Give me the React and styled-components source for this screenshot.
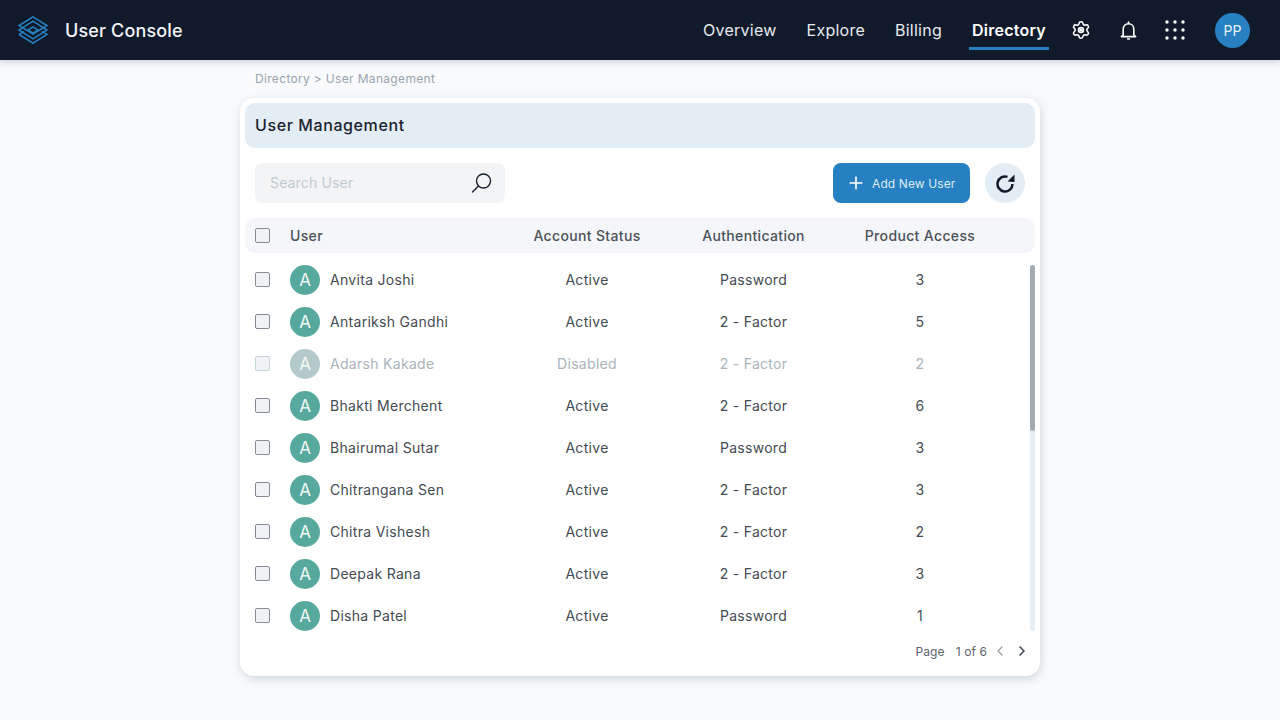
import React from 'react'
import styled, { createGlobalStyle } from 'styled-components'
import { Settings, Plus, ChevronLeft, ChevronRight } from 'lucide-react'

const GlobalStyle = createGlobalStyle`
  html, body {
    margin: 0;
    padding: 0;
    background: #f8fafc;
    font-family: Inter, "Noto Sans", sans-serif;
    color: #3f4650;
  }
  * { box-sizing: border-box; }
`;

const Page = styled.div`
  width: 1280px;
  height: 720px;
  overflow: hidden;
`;

const Header = styled.header`
  height: 60px;
  background: #111a2b;
  display: flex;
  align-items: center;
  padding: 0 30px 0 18px;
  box-shadow: 0 2px 6px rgba(60, 70, 85, 0.25);
`;

const Brand = styled.div`
  display: flex;
  align-items: center;
  gap: 17px;
  font-size: 18px;
  font-weight: 500;
  color: #f2f5f8;
  letter-spacing: 0.15px;
  margin-right: auto;
`;

const Nav = styled.nav`
  display: flex;
  align-items: center;
  height: 60px;
  gap: 24px;
  margin-right: 22px;
`;

const NavItem = styled.a`
  position: relative;
  padding: 0 3px;
  font-size: 16px;
  line-height: 60px;
  letter-spacing: 0.25px;
  font-weight: ${p => (p.$active ? 600 : 400)};
  color: ${p => (p.$active ? '#ffffff' : '#e6eaef')};
  &::after {
    content: ${p => (p.$active ? "''" : 'none')};
    position: absolute;
    left: 0;
    right: 0;
    bottom: 10px;
    height: 3px;
    background: #2680c2;
  }
`;

const IconRow = styled.div`
  display: flex;
  align-items: center;
  gap: 27px;
  color: #ffffff;
`;

const HeaderIcon = styled.span`
  display: flex;
  width: 20px;
  height: 20px;
  align-items: center;
  justify-content: center;
`;

const Avatar = styled.div`
  width: 35px;
  height: 35px;
  margin-left: 3px;
  border-radius: 50%;
  background: #2680c2;
  color: #e9f2f9;
  font-size: 14px;
  display: flex;
  align-items: center;
  justify-content: center;
`;

const Main = styled.main`
  width: 800px;
  margin: 0 auto;
`;

const Breadcrumb = styled.div`
  height: 38px;
  padding: 12px 0 0 15px;
  font-size: 12px;
  line-height: 14px;
  letter-spacing: 0.33px;
  color: #9aa5ad;
`;

const Card = styled.section`
  position: relative;
  height: 578px;
  padding: 5px;
  background: #ffffff;
  border-radius: 14px;
  box-shadow: 1px 3px 10px rgba(70, 85, 100, 0.2);
`;

const TitleBar = styled.h1`
  margin: 0;
  height: 45px;
  padding: 0 10px 2px;
  display: flex;
  align-items: center;
  font-size: 16px;
  font-weight: 500;
  letter-spacing: 0.6px;
  color: #1a2230;
  background: #e3edf5;
  border-radius: 10px;
`;

const Toolbar = styled.div`
  display: flex;
  align-items: center;
  margin-top: 15px;
  padding: 0 10px;
  height: 40px;
`;

const Search = styled.div`
  width: 250px;
  height: 40px;
  padding: 0 12px 0 15px;
  background: #f3f4f6;
  border-radius: 8px;
  display: flex;
  align-items: center;
  justify-content: space-between;
  font-size: 14px;
  letter-spacing: 0.15px;
  color: #c0cbd0;
`;

const Placeholder = styled.span`
  padding-bottom: 2px;
`;

const AddButton = styled.button`
  margin-left: auto;
  width: 137px;
  height: 40px;
  padding: 0 0 0 13px;
  border: 0;
  border-radius: 8px;
  background: #2680c2;
  color: #dfebf5;
  font: 400 12px Inter, sans-serif;
  letter-spacing: 0.1px;
  display: flex;
  align-items: center;
  gap: 6px;
`;

const RefreshButton = styled.button`
  width: 40px;
  height: 40px;
  margin-left: 15px;
  padding: 0;
  border: 0;
  border-radius: 50%;
  background: #e3edf5;
  display: flex;
  align-items: center;
  justify-content: center;
`;

const gridColumns = '35px 214px 166px 167px 166px 1fr';

const TableHead = styled.div`
  display: grid;
  grid-template-columns: ${gridColumns};
  align-items: center;
  height: 35px;
  margin-top: 15px;
  padding-left: 10px;
  background: #f4f6f9;
  border-radius: 10px;
  font-size: 14px;
  font-weight: 500;
  letter-spacing: 0.35px;
  color: #4b5159;
`;

const Rows = styled.div`
  margin-top: 6px;
`;

const Row = styled.div`
  display: grid;
  grid-template-columns: ${gridColumns};
  align-items: center;
  height: 42px;
  padding-left: 10px;
  font-size: 14px;
  letter-spacing: 0.3px;
  color: ${p => (p.$disabled ? '#aab4ba' : '#454b53')};
`;

const Check = styled.span`
  display: block;
  width: 15px;
  height: 15px;
  margin-bottom: 1px;
  border-radius: 2px;
  border: 1px solid ${p => (p.$disabled ? '#c6d6d8' : '#858c96')};
  background: #f1f2f5;
`;

const UserCell = styled.div`
  display: flex;
  align-items: center;
  gap: 10px;
`;

const UserName = styled.span`
  padding-bottom: 2px;
`;

const Initial = styled.span`
  width: 30px;
  height: 30px;
  border-radius: 50%;
  background: ${p => (p.$disabled ? '#b4c9ca' : '#57a99d')};
  color: #f4f9f8;
  font-size: 17px;
  font-weight: 400;
  letter-spacing: 0;
  display: flex;
  align-items: center;
  justify-content: center;
`;

const Cell = styled.div`
  text-align: center;
`;

const RowCell = styled(Cell)`
  padding-bottom: 2px;
`;

const ScrollTrack = styled.div`
  position: absolute;
  top: 167px;
  right: 5px;
  width: 5px;
  height: 366px;
  border-radius: 3px;
  background: #e6edf3;
`;

const ScrollThumb = styled.div`
  height: 166px;
  border-radius: 3px;
  background: #a3abb3;
`;

const Pager = styled.div`
  position: absolute;
  right: 7px;
  bottom: 17px;
  display: flex;
  align-items: center;
  font-size: 12px;
  letter-spacing: 0.1px;
  color: #5d646d;
`;

const PageCount = styled.span`
  margin: 0 2px 0 11px;
`;

const PagerBtn = styled.span`
  display: flex;
  width: 22px;
  justify-content: center;
  color: ${p => (p.$off ? '#9aa2aa' : '#4b5159')};
`;

const users = [
  ['Anvita Joshi', 'Active', 'Password', 3],
  ['Antariksh Gandhi', 'Active', '2 - Factor', 5],
  ['Adarsh Kakade', 'Disabled', '2 - Factor', 2],
  ['Bhakti Merchent', 'Active', '2 - Factor', 6],
  ['Bhairumal Sutar', 'Active', 'Password', 3],
  ['Chitrangana Sen', 'Active', '2 - Factor', 3],
  ['Chitra Vishesh', 'Active', '2 - Factor', 2],
  ['Deepak Rana', 'Active', '2 - Factor', 3],
  ['Disha Patel', 'Active', 'Password', 1],
];

const Logo = () => (
  <svg width="30" height="28" viewBox="0 0 30 28" fill="none" stroke="#2680c2" strokeWidth="1.5">
    <path d="M15 0.8 L29 9.5 L15 18.2 L1 9.5 Z" />
    <path d="M15 5.2 L29 14 L15 22.8 L1 14 Z" />
    <path d="M1 18.5 L15 27.2 L29 18.5 L24 15.4 M6 15.4 L1 18.5" />
    <path d="M15 10.8 L20 14 L15 17.2 L10 14 Z" />
  </svg>
);

const BellIcon = () => (
  <svg width="17" height="19" viewBox="0 0 17 19" fill="none" stroke="#fff" strokeWidth="1.6" strokeLinecap="round" strokeLinejoin="round">
    <path d="M3.2 14 V8 C3.2 5 5.4 2.8 8.5 2.8 C11.6 2.8 13.8 5 13.8 8 V14 L15.6 15.6 H1.4 Z" />
    <path d="M8.5 1 V2.4" />
    <path d="M7.6 18 H9.4" />
  </svg>
);

const GridDots = () => (
  <svg width="20" height="20" viewBox="0 0 20 20" fill="#fff">
    {[2, 10, 18].map(y => [2, 10, 18].map(x => <circle key={`${x}-${y}`} cx={x} cy={y} r="1.7" />))}
  </svg>
);

const SearchIcon = () => (
  <svg width="22" height="22" viewBox="0 0 22 22" fill="none" stroke="#1a2230" strokeWidth="1.4" strokeLinecap="round">
    <circle cx="12.5" cy="9" r="7" />
    <path d="M7.5 14 L1.5 20" />
  </svg>
);

const RefreshIcon = () => (
  <svg width="20" height="20" viewBox="0 0 20 20" fill="none">
    <path d="M17.5 11 A7.5 7.5 0 1 1 12.5 3.9" stroke="#111a2b" strokeWidth="2.5" />
    <path d="M19.5 1.5 L19.5 9 L12.5 8.5 Z" fill="#111a2b" />
  </svg>
);

export default function App() {
  return (
    <Page>
      <GlobalStyle />
      <Header>
        <Brand><Logo />User Console</Brand>
        <Nav>
          <NavItem>Overview</NavItem>
          <NavItem>Explore</NavItem>
          <NavItem>Billing</NavItem>
          <NavItem $active>Directory</NavItem>
        </Nav>
        <IconRow>
          <HeaderIcon>
            <Settings size={20} strokeWidth={1.9}>
              <circle cx="12" cy="12" r="1.2" fill="currentColor" />
            </Settings>
          </HeaderIcon>
          <HeaderIcon><BellIcon /></HeaderIcon>
          <HeaderIcon><GridDots /></HeaderIcon>
          <Avatar>PP</Avatar>
        </IconRow>
      </Header>
      <Main>
        <Breadcrumb>Directory &gt; User Management</Breadcrumb>
        <Card>
          <TitleBar>User Management</TitleBar>
          <Toolbar>
            <Search><Placeholder>Search User</Placeholder><SearchIcon /></Search>
            <AddButton><Plus size={20} strokeWidth={2} color="#fff" />Add New User</AddButton>
            <RefreshButton><RefreshIcon /></RefreshButton>
          </Toolbar>
          <TableHead>
            <Check />
            <div>User</div>
            <Cell>Account Status</Cell>
            <Cell>Authentication</Cell>
            <Cell>Product Access</Cell>
          </TableHead>
          <Rows>
            {users.map(([name, status, auth, access]) => {
              const off = status === 'Disabled'
              return (
                <Row key={name} $disabled={off}>
                  <Check $disabled={off} />
                  <UserCell>
                    <Initial $disabled={off}>A</Initial>
                    <UserName>{name}</UserName>
                  </UserCell>
                  <RowCell>{status}</RowCell>
                  <RowCell>{auth}</RowCell>
                  <RowCell>{access}</RowCell>
                </Row>
              )
            })}
          </Rows>
          <ScrollTrack><ScrollThumb /></ScrollTrack>
          <Pager>
            Page<PageCount>1 of 6</PageCount>
            <PagerBtn $off><ChevronLeft size={16} /></PagerBtn>
            <PagerBtn><ChevronRight size={16} strokeWidth={2.6} /></PagerBtn>
          </Pager>
        </Card>
      </Main>
    </Page>
  )
}
